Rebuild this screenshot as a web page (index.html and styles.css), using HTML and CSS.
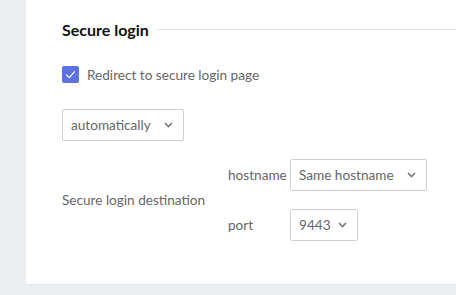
FILE: index.html
```html
<!DOCTYPE html>
<html>
<head>
<meta charset="utf-8">
<link rel="stylesheet" href="styles.css">
</head>
<body>
<div class="page">
  <div class="card">
    <div class="title-row">
      <h2 class="title">Secure login</h2>
      <div class="rule"></div>
    </div>
    <label class="check-row">
      <span class="checkbox"><svg viewBox="0 0 17 17" width="17" height="17"><path d="M4.5 9 L7.3 11.6 L12.5 5.6" fill="none" stroke="#fff" stroke-width="1.2" stroke-linecap="round" stroke-linejoin="round"/></svg></span>
      <span class="check-label">Redirect to secure login page</span>
    </label>
    <div class="select sel-auto"><span>automatically</span><svg class="chev" viewBox="0 0 9 6" width="9" height="6"><path d="M1 1 L4.5 4.5 L8 1" fill="none" stroke="#777" stroke-width="1.6"/></svg></div>
    <div class="dest">
      <div class="dest-label">Secure login destination</div>
      <div class="dest-grid">
        <div class="sub-label">hostname</div>
        <div class="select sel-host"><span>Same hostname</span><svg class="chev" viewBox="0 0 9 6" width="9" height="6"><path d="M1 1 L4.5 4.5 L8 1" fill="none" stroke="#777" stroke-width="1.6"/></svg></div>
        <div class="sub-label">port</div>
        <div class="select sel-port"><span>9443</span><svg class="chev" viewBox="0 0 9 6" width="9" height="6"><path d="M1 1 L4.5 4.5 L8 1" fill="none" stroke="#777" stroke-width="1.6"/></svg></div>
      </div>
    </div>
  </div>
</div>
</body>
</html>
```
FILE: styles.css
```css
html, body {
  margin: 0;
  padding: 0;
  background: #eceff1;
  font-family: "Source Sans Pro", "Lato", "Noto Sans", sans-serif;
}
.page {
  padding-left: 26px;
  height: 295px;
}
.card {
  background: #fff;
  height: 284px;
  box-sizing: border-box;
  padding: 16px 0 0 36px;
  box-shadow: 0 1px 0 #e3e6e8;
}
.title-row {
  display: flex;
  align-items: center;
  height: 27px;
}
.title {
  margin: 0;
  font-size: 16px;
  font-weight: bold;
  color: #111;
}
.rule {
  flex: 1;
  border-top: 1px solid #e2e2e2;
  margin-left: 8px;
}
.check-row {
  display: flex;
  align-items: center;
  margin-top: 23px;
  height: 17px;
}
.checkbox {
  width: 17px;
  height: 17px;
  background: #5b72e0;
  border-radius: 2px;
  display: block;
}
.checkbox svg { display: block; }
.check-label {
  margin-left: 8px;
  font-size: 13.6px;
  color: #666;
}
.select {
  display: inline-flex;
  align-items: center;
  justify-content: space-between;
  height: 32px;
  box-sizing: border-box;
  border: 1px solid #cfcfcf;
  border-radius: 2px;
  padding: 0 10px 0 8px;
  font-size: 13.6px;
  color: #666;
  background: #fff;
}
.chev { display: block; }
.sel-auto { width: 122px; margin-top: 26px; }
.dest {
  display: flex;
  align-items: center;
  margin-top: 18px;
}
.dest-label {
  width: 166px;
  font-size: 13.6px;
  color: #666;
}
.dest-grid {
  display: grid;
  grid-template-columns: 62px auto;
  row-gap: 18px;
  align-items: center;
  justify-items: start;
}
.sub-label {
  font-size: 13.6px;
  color: #666;
}
.sel-host { width: 137px; }
.sel-port { width: 68px; }
```
